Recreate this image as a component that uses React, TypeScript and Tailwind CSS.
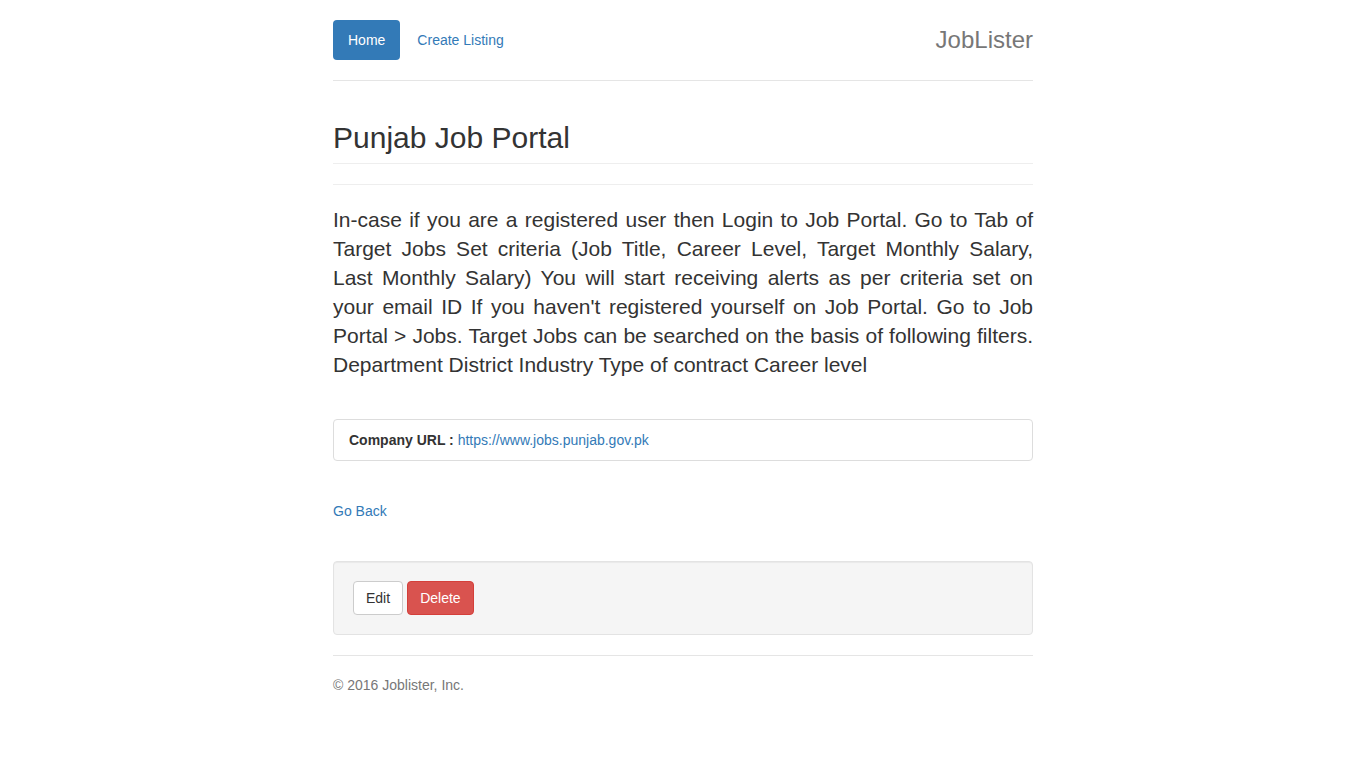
import React from "react";

const App: React.FC = () => {
  return (
    <div className="min-h-screen bg-white font-['Liberation_Sans',Arial,sans-serif] text-[14px] leading-[20px] text-[#333]">
      <div className="mx-auto w-[730px] px-[15px]">
        {/* Header */}
        <div className="flex items-center justify-between border-b border-[#e5e5e5] pt-[20px] pb-[20px]">
          <ul className="flex items-center">
            <li>
              <a
                href="#"
                className="block rounded-[4px] bg-[#337ab7] px-[15px] py-[10px] text-white"
              >
                Home
              </a>
            </li>
            <li className="ml-[2px]">
              <a href="#" className="block px-[15px] py-[10px] text-[#337ab7]">
                Create Listing
              </a>
            </li>
          </ul>
          <h3 className="text-[24px] leading-[40px] text-[#777]">JobLister</h3>
        </div>

        {/* Job detail */}
        <div className="mt-[40px] border-b border-[#eee] pb-[9px]">
          <h2 className="text-[30px] leading-[33px] font-normal">Punjab Job Portal</h2>
        </div>
        <hr className="my-[20px] border-t border-[#eee]" />

        <p className="text-justify text-[21px] leading-[29px]">
          In-case if you are a registered user then Login to Job Portal. Go to
          Tab of Target Jobs Set criteria (Job Title, Career Level, Target
          Monthly Salary, Last Monthly Salary) You will start receiving alerts
          as per criteria set on your email ID If you haven't registered
          yourself on Job Portal. Go to Job Portal &gt; Jobs. Target Jobs can be
          searched on the basis of following filters. Department District
          Industry Type of contract Career level
        </p>

        <ul className="mt-[40px]">
          <li className="rounded-[4px] border border-[#ddd] bg-white px-[15px] py-[10px]">
            <strong className="font-bold">Company URL : </strong>
            <a href="#" className="text-[#337ab7]">
              https://www.jobs.punjab.gov.pk
            </a>
          </li>
        </ul>

        <div className="mt-[40px]">
          <a href="#" className="text-[#337ab7]">
            Go Back
          </a>
        </div>

        <div className="mt-[40px] mb-[20px] flex gap-[4px] rounded-[4px] border border-[#e3e3e3] bg-[#f5f5f5] p-[19px] shadow-[inset_0_1px_1px_rgba(0,0,0,0.05)]">
          <a
            href="#"
            className="rounded-[4px] border border-[#ccc] bg-white px-[12px] py-[6px] text-[#333]"
          >
            Edit
          </a>
          <button className="rounded-[4px] border border-[#d43f3a] bg-[#d9534f] px-[12px] py-[6px] text-white">
            Delete
          </button>
        </div>

        {/* Footer */}
        <footer className="border-t border-[#e5e5e5] pt-[19px]">
          <p className="text-[#777]">© 2016 Joblister, Inc.</p>
        </footer>
      </div>
    </div>
  );
};

export default App;
